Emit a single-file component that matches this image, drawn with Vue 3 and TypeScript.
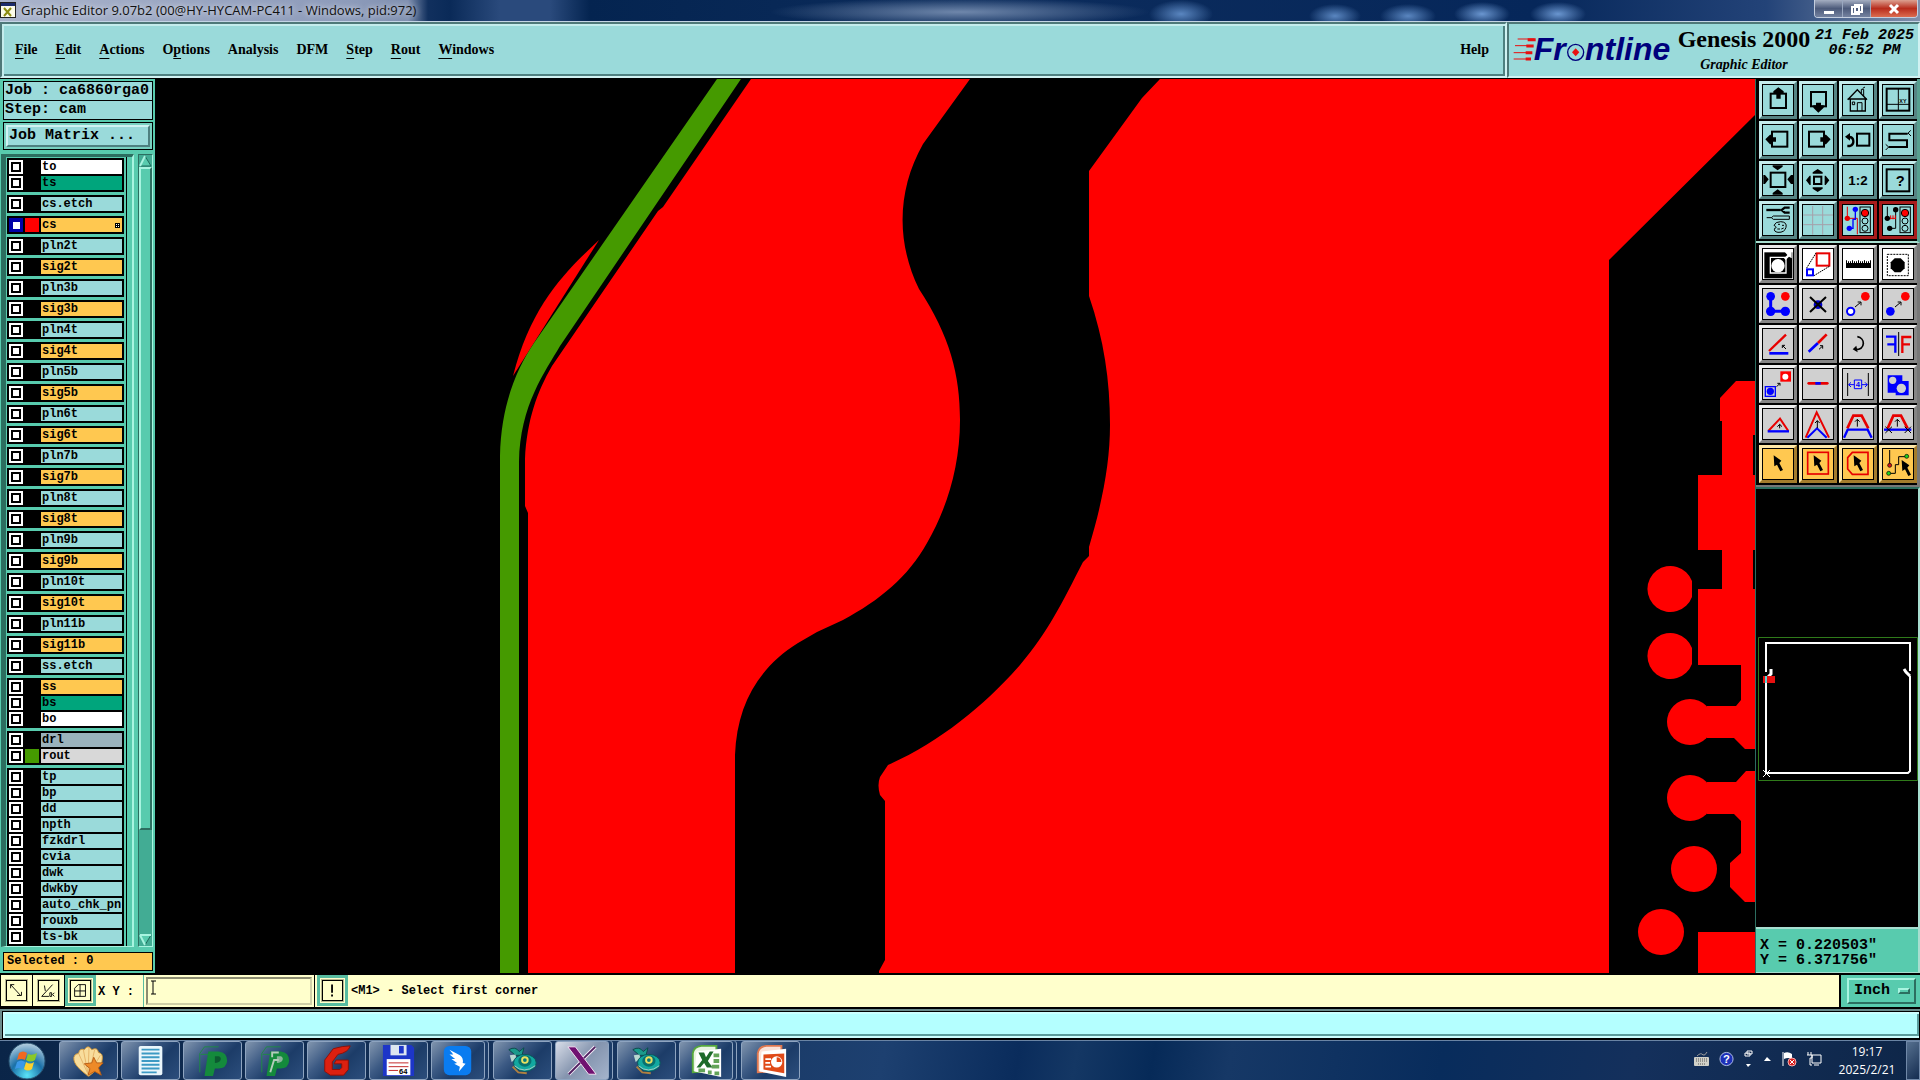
<script setup lang="ts">
import { ref } from 'vue'

interface MenuItem { before: string; key: string; after: string }
interface Layer { name: string; tone: string; color?: string; active?: boolean }
interface Tool { label: string; art: string; y: number; tone?: string }
interface Task { label: string; art: string; stacked?: boolean; active?: boolean }

const menus: MenuItem[] = [
  { before: '', key: 'F', after: 'ile' },
  { before: '', key: 'E', after: 'dit' },
  { before: '', key: 'A', after: 'ctions' },
  { before: 'O', key: 'p', after: 'tions' },
  { before: 'Analysis', key: '', after: '' },
  { before: 'DFM', key: '', after: '' },
  { before: '', key: 'S', after: 'tep' },
  { before: '', key: 'R', after: 'out' },
  { before: '', key: 'W', after: 'indows' },
]

const innerNames = [
  'pln2t', 'sig2t', 'pln3b', 'sig3b', 'pln4t', 'sig4t', 'pln5b', 'sig5b', 'pln6t', 'sig6t',
  'pln7b', 'sig7b', 'pln8t', 'sig8t', 'pln9b', 'sig9b', 'pln10t', 'sig10t', 'pln11b', 'sig11b',
]

const layerGroups: Layer[][] = [
  [{ name: 'to', tone: 'silk' }, { name: 'ts', tone: 'mask' }],
  [{ name: 'cs.etch', tone: 'misc' }],
  [{ name: 'cs', tone: 'signal', color: '#ff0000', active: true }],
  ...innerNames.map((name): Layer[] => [{ name, tone: name.startsWith('sig') ? 'signal' : 'misc' }]),
  [{ name: 'ss.etch', tone: 'misc' }],
  [{ name: 'ss', tone: 'signal' }, { name: 'bs', tone: 'mask' }, { name: 'bo', tone: 'silk' }],
  [{ name: 'drl', tone: 'drill' }, { name: 'rout', tone: 'rout', color: '#459a00' }],
  ['tp', 'bp', 'dd', 'npth', 'fzkdrl', 'cvia', 'dwk', 'dwkby', 'auto_chk_pnl', 'rouxb', 'ts-bk']
    .map((name): Layer => ({ name, tone: 'misc' })),
]

const k = 'fill="none" stroke="#000"'
const b = 'fill="none" stroke="#0000ff"'
const r = 'fill="none" stroke="#e80000"'
const cursor = (x: number, y: number) =>
  `<path transform="translate(${x} ${y})" d="M0 0L23 16L17 23L28 44L20 48L10 28L2 33Z"/>`
const upArrow = (x: number, y: number, h: number) =>
  `<path ${k} stroke-width="3" d="M${x} ${y + h}V${y}M${x - 7} ${y + 7}L${x} ${y}L${x + 7} ${y + 7}"/>`

const viewTools: Tool[] = [
  { label: 'Pan up', y: 24, art: `<rect ${k} stroke-width="6" x="62" y="53" width="46" height="43"/><path d="M70 46L85 34L101 46V52H92V68H79V52H70Z"/>` },
  { label: 'Pan down', y: 24, art: `<rect ${k} stroke-width="6" x="183" y="48" width="45" height="43"/><path d="M190 88V95L205 110L221 95V88H213V80H198V88Z"/>` },
  { label: 'Home', y: 24, art: `<path ${k} stroke-width="4" d="M293 71L322 41L351 71M301 68V105H346V68M293 69H351"/><path ${k} stroke-width="3" d="M322 105V80H336V105M307 78H314V86H307ZM334 52V40H341V60M338 37L345 33"/>` },
  { label: 'Origin window', y: 24, art: `<rect ${k} stroke-width="6" x="410" y="38" width="68" height="66"/><path ${k} stroke-width="3" d="M445 38V104M410 85H479"/><text x="448" y="81" font-size="16">XY</text>` },
  { label: 'Pan left', y: 144, art: `<rect ${k} stroke-width="6" x="66" y="167" width="46" height="45"/><path d="M46 190L60 176H66V184H78V197H66V205H60Z"/>` },
  { label: 'Pan right', y: 144, art: `<rect ${k} stroke-width="6" x="177" y="167" width="45" height="45"/><path d="M242 190L228 176H221V184H211V197H221V205H228Z"/>` },
  { label: 'Previous view', y: 144, art: `<rect ${k} stroke-width="6" x="321" y="173" width="37" height="36"/><path ${k} stroke-width="7" d="M292 210H300Q311 206 310 195Q309 183 297 183"/><path d="M285 182L300 171V194Z"/>` },
  { label: 'Serpentine', y: 144, art: `<path ${k} stroke-width="6" d="M473 173H418V193H471V213H416"/><path ${k} stroke-width="3" d="M473 173L482 163M474 171L483 180M416 213L407 205M416 213L407 222"/>` },
  { label: 'Zoom in', y: 264, art: `<rect ${k} stroke-width="6" x="62" y="290" width="44" height="43"/><path d="M68 268H98V272L83 283L68 272ZM68 356V351L83 340L98 351V356ZM40 297H45L56 310L45 324H40ZM129 297H123L112 310L123 324H129Z"/>` },
  { label: 'Zoom out', y: 264, art: `<rect ${k} stroke-width="6" x="192" y="302" width="22" height="22"/><path d="M188 293V289L203 279L218 289V293ZM188 334V338L203 348L218 338V334ZM182 299H179L168 313L179 327H182ZM224 299H227L238 313L227 327H224Z"/>` },
  { label: 'Scale 1:2', y: 264, art: `<text x="324" y="328" text-anchor="middle" font-size="40">1:2</text>` },
  { label: 'Query', y: 264, art: `<rect ${k} stroke-width="6" x="410" y="280" width="68" height="66"/><text x="451" y="331" text-anchor="middle" font-size="44">?</text>` },
  { label: 'Setup', y: 384, art: `<path ${k} stroke-width="7" d="M49 402H92"/><path ${k} stroke-width="7" d="M119 395H104L95 402L104 410H119"/><path ${k} stroke-width="3" d="M50 425H64L70 420H118V430H70L64 425M72 448Q76 437 92 437Q112 438 108 454Q104 470 84 469Q70 467 74 457Q84 455 72 448ZM84 445H90M96 448H102M82 459H90M94 459L101 456"/>` },
  { label: 'Grid', y: 384, art: `<path fill="none" stroke="#a5a0aa" stroke-width="3" d="M188 390V476M218 390V476M160 417H249M160 446H249"/>` },
  { label: 'Net check', y: 384, tone: 'alarm', art: `<path ${r} stroke-width="3" d="M292 392V427H322V475"/><path ${b} stroke-width="4" d="M316 400V430H309V457H298"/><circle fill="#e80000" cx="292" cy="427" r="8"/><circle fill="#0000ff" cx="316" cy="400" r="8"/><circle fill="#0000ff" cx="298" cy="457" r="8"/><rect ${k} stroke-width="3" x="330" y="393" width="31" height="77"/><circle fill="#f00" stroke="#000" stroke-width="3" cx="345" cy="411" r="11"/><circle ${k} stroke-width="3" cx="345" cy="435" r="9"/><circle ${k} stroke-width="3" cx="345" cy="457" r="9"/>` },
  { label: 'Rule check', y: 384, tone: 'alarm', art: `<path ${k} stroke-width="3" d="M412 392V427M437 401V457H418"/><path ${r} stroke-width="3" d="M414 427H438M422 418V430M429 418V430M436 418V430"/><circle cx="412" cy="427" r="8"/><circle cx="437" cy="401" r="8"/><circle cx="419" cy="457" r="8"/><rect ${k} stroke-width="3" x="450" y="393" width="31" height="77"/><circle fill="#f00" stroke="#000" stroke-width="3" cx="465" cy="411" r="11"/><circle ${k} stroke-width="3" cx="465" cy="435" r="9"/><circle ${k} stroke-width="3" cx="465" cy="457" r="9"/>` },
]

const editTools: Tool[] = [
  { label: 'Select feature', y: 515, tone: 'white', art: `<rect x="43" y="528" width="84" height="78"/><path fill="none" stroke="#fff" stroke-width="4" d="M61 543H108V590H61Z"/><circle fill="#fff" cx="84" cy="568" r="20"/><path fill="#fff" d="M102 546L112 536L104 526H125V546L117 541L107 551Z"/>` },
  { label: 'Reshape', y: 515, tone: 'white', art: `<rect ${b} stroke-width="6" x="171" y="579" width="18" height="18"/><rect ${r} stroke-width="6" x="200" y="531" width="38" height="37"/><path ${k} stroke-width="3" stroke-dasharray="5 2" d="M170 575L198 530M192 598L238 570"/>` },
  { label: 'Measure', y: 515, tone: 'white', art: `<path d="M288 552H291V560H294V555H297V560H300V555H303V560H306V552H309V560H312V555H315V560H318V555H321V560H324V552H327V560H330V555H333V560H336V555H339V560H342V552H345V560H348V555H351V560H354V555H357V560H360V552H363V575H288Z"/>` },
  { label: 'Pad select', y: 515, tone: 'white', art: `<rect ${k} stroke-width="3" stroke-dasharray="6 3" x="412" y="534" width="63" height="64"/><path d="M434 546H452L464 558V576L452 588H434L422 576V558Z"/>` },
  { label: 'Add net', y: 24, art: `<path ${b} stroke-width="9" d="M62 49V94H106"/><circle fill="#00f" cx="62" cy="49" r="13"/><circle fill="#00f" cx="62" cy="94" r="14"/><circle fill="#00f" cx="106" cy="94" r="14"/><circle fill="#f00" cx="106" cy="49" r="13"/>` },
  { label: 'Delete', y: 24, art: `<circle fill="#00c" cx="204" cy="74" r="13"/><path ${k} stroke-width="6" d="M180 51L228 96M228 51L180 96"/>` },
  { label: 'Move', y: 24, art: `<circle fill="#f00" cx="346" cy="49" r="13"/><circle fill="#fff" stroke="#00f" stroke-width="6" cx="302" cy="94" r="11"/><path ${k} stroke-width="3" d="M315 81L332 67M323 66H333V76"/>` },
  { label: 'Copy', y: 24, art: `<circle fill="#f00" cx="466" cy="49" r="13"/><circle fill="#00f" cx="421" cy="94" r="13"/><path ${k} stroke-width="3" d="M435 81L452 67M443 66H453V76"/>` },
  { label: 'Rotate', y: 144, art: `<path ${r} stroke-width="7" d="M57 213L108 164"/><path ${b} stroke-width="8" d="M58 220H115"/><path ${k} stroke-width="3" d="M108 207L98 197M97 204V196H105"/>` },
  { label: 'Extend line', y: 144, art: `<path ${b} stroke-width="8" d="M176 215L204 189"/><path ${r} stroke-width="8" d="M204 189L230 163"/><path ${k} stroke-width="3" d="M207 208L218 198M210 197H218V206"/>` },
  { label: 'Undo', y: 144, art: `<path ${k} stroke-width="5" d="M322 170C346 174 348 208 316 209"/><path d="M308 208L319 197L323 217Z"/>` },
  { label: 'Mirror', y: 144, art: `<path ${b} stroke-width="7" d="M436 218V170H408M436 193H412"/><path ${k} stroke-width="3" d="M446 156V228"/><path ${r} stroke-width="7" d="M457 219V171H484M457 193H480"/>` },
  { label: 'Change symbol', y: 264, art: `<rect fill="#f00" x="91" y="274" width="32" height="31"/><circle fill="#fff" cx="106" cy="290" r="9"/><rect ${b} stroke-width="4" x="46" y="320" width="30" height="29"/><circle fill="#00f" cx="61" cy="334" r="11"/><path ${k} stroke-width="3" d="M80 320L89 311M82 310H90V317"/>` },
  { label: 'Break line', y: 264, art: `<path ${r} stroke-width="8" stroke-linecap="round" d="M176 310H232"/><path ${b} stroke-width="8" d="M196 310H212"/>` },
  { label: 'Spacing', y: 264, art: `<path ${k} stroke-width="3" d="M293 279V348M355 279V348"/><path ${b} stroke-width="3" d="M296 314H312M336 314H352M303 307L296 314L303 321M345 307L352 314L345 321M313 300H335V326H313Z"/><text fill="#00f" x="324" y="322" text-anchor="middle" font-size="23">4</text>` },
  { label: 'Merge pads', y: 264, art: `<path fill="#00f" d="M413 286H457V303H476V346H437V338H413Z"/><circle fill="#d0d0d0" cx="428" cy="301" r="11"/><circle fill="#d0d0d0" cx="454" cy="325" r="14"/>` },
  { label: 'Chamfer', y: 384, art: `<path ${r} stroke-width="6" d="M55 453L90 416L115 453"/><path ${b} stroke-width="7" d="M53 454H117"/>${upArrow(89, 433, 12)}` },
  { label: 'Peak', y: 384, art: `<path ${r} stroke-width="6" d="M167 473L200 397L237 473"/><path ${b} stroke-width="6" d="M172 473L201 445L230 473"/>${upArrow(202, 422, 22)}` },
  { label: 'Slide segment', y: 384, art: `<path ${r} stroke-width="8" d="M292 445L310 407H335L355 445"/><path ${b} stroke-width="7" d="M282 473L293 449H353L365 473"/>${upArrow(322, 418, 22)}` },
  { label: 'Stretch segment', y: 384, art: `<path ${r} stroke-width="8" d="M413 445L430 407H453L473 445"/><path ${b} stroke-width="7" d="M402 449H484"/><path ${k} stroke-width="3" d="M406 440L426 459M426 440L406 459M464 440L483 459M483 440L464 459"/>${upArrow(442, 418, 22)}` },
  { label: 'Pick', y: 504, tone: 'gold', art: cursor(71, 526) },
  { label: 'Pick in frame', y: 504, tone: 'gold', art: `<rect ${r} stroke-width="5" x="173" y="517" width="62" height="65"/>${cursor(191, 526)}` },
  { label: 'Pick in polygon', y: 504, tone: 'gold', art: `<path ${r} stroke-width="5" d="M307 517H354V583H307L293 567V533Z"/>${cursor(311, 526)}` },
  { label: 'Pick net', y: 504, tone: 'gold', art: `<path ${k} stroke-width="3" d="M419 510V553M416 580H436V554H446V530H468"/><circle fill="#d01818" stroke="#000" stroke-width="2" cx="419" cy="556" r="6"/><circle fill="#20d020" stroke="#000" stroke-width="2" cx="416" cy="580" r="6"/><circle fill="#20d020" stroke="#000" stroke-width="2" cx="470" cy="529" r="6"/>${cursor(455, 540)}` },
]

const iconBox = (tool: Tool, i: number) => `${36 + 120 * (i % 4)} ${tool.y} 96 96`

const ship = `<path d="M3 6Q10 2 14 8L19 4L17 12L10 12Z" fill="#1a9a8c" stroke="#0c4a48"/><path d="M4 12L10 11L11 15L6 19Z" fill="#b8d8d0"/><ellipse cx="20" cy="20" rx="12" ry="9" fill="#12a8a0" stroke="#0a5558"/><path d="M9 23Q19 32 31 23" fill="none" stroke="#a8ccc4" stroke-width="1"/><ellipse cx="20" cy="18" rx="7" ry="6" fill="#087070"/><circle cx="20" cy="17" r="4" fill="#e8e060"/><circle cx="20" cy="17" r="2" fill="#087878"/><path d="M7 24L13 30L22 31" fill="none" stroke="#b08040" stroke-width="2"/>`
const pcbP = (tone: string) => `<path d="M4 30V10L9 3H24M5 11H14" fill="none" stroke="#1e8a44"/><path d="M13 8H24Q33 9 33 18Q32 26 24 26H20L18 34H9Z" fill="#148a3c"/><path d="M20 13H24Q27 14 26 17Q25 20 20 20Z" fill="${tone}"/>`

const tasks: Task[] = [
  { label: 'Shell', art: `<path d="M17 34C10 28 1 22 2 14Q3 10 7 10Q8 4 13 6Q17 0 21 6Q27 3 28 9Q33 10 32 16C32 24 24 29 18 34Z" fill="#f8dd9c" stroke="#d49a3a"/><path d="M17 32L7 10M17 32L12 6M17 32L18 4M18 32L24 6M18 32L30 12" stroke="#e4b468" fill="none"/><path d="M23 14L26 20L33 20L28 25L31 33L24 29L17 33L19 26L13 21L21 20Z" fill="#ee8a28" stroke="#b85e14"/>` },
  { label: 'Notepad', art: `<rect x="5" y="2" width="25" height="31" rx="2" fill="#eaf6fb"/><path d="M8 6H27M8 10H27M8 14H27M8 18H27M8 22H27M8 26H27M8 30H24" stroke="#3d9ac4" stroke-width="2"/>` },
  { label: 'Panel tool', art: pcbP('#0c5a30') },
  { label: 'Film tool', art: `${pcbP('#8ab49a')}<path d="M15 14V9H22M13 30L17 17H22" fill="none" stroke="#b4ccbc" stroke-width="2"/>` },
  { label: 'Gerber tool', art: `<path d="M32 2Q24 2 14 5L5 17V29L11 33H25L30 27V17H17L15 21H23V25L21 27H13V19L19 11Q30 9 32 2Z" fill="#dc2010" stroke="#8c1008"/>` },
  { label: 'Disk', art: `<path d="M1 1H31L34 4V34H1Z" fill="#1d36c8"/><rect x="9" y="1" width="17" height="11" fill="#dde6f0"/><rect x="18" y="2" width="5" height="8" fill="#1d36c8"/><rect x="5" y="16" width="25" height="17" fill="#fff"/><path d="M7 20H28M7 24H28M7 28H17" stroke="#c02020"/><text x="18" y="32" font-size="8">64</text>` },
  { label: 'Messenger', stacked: true, art: `<rect x="3" y="2" width="29" height="31" rx="6" fill="#0a7cf0"/><path d="M9 6L20 12Q24 15 23 20L26 21L19 29L20 24L14 21L17 20L11 16L15 16L9 11L13 11Z" fill="#fff"/>` },
  { label: 'Genesis', art: ship },
  { label: 'X server', stacked: true, active: true, art: `<path d="M3 3H11L33 32H25Z" fill="#701070" stroke="#f4e8f4"/><path d="M32 3L20 15M16 20L4 32" stroke="#f0e8f4" stroke-width="4"/><path d="M32 3L20 15M16 20L4 32" stroke="#502060" stroke-width="2"/>` },
  { label: 'Genesis output', art: ship },
  { label: 'Excel', stacked: true, art: `<path d="M4 30V10Q5 3 13 2H29V28Z" fill="#e8f4e2" stroke="#56a83c" stroke-width="2"/><path d="M8 8L34 5V35L6 29Z" fill="#fff"/><path d="M10 9H16L18 14L22 8H26L20 18L25 25H19L16 20L12 25H8L14 17Z" fill="#1d6a2a"/><path d="M26 12H32M26 18H32M24 24H32M10 28H17M20 30H24M27 31H32" stroke="#63a458" stroke-width="4"/>` },
  { label: 'PowerPoint', art: `<path d="M4 30V10Q5 3 13 2H29V28Z" fill="#fbe2d8" stroke="#e07850" stroke-width="2"/><path d="M8 8L34 5V35L6 29Z" fill="#fff"/><path d="M10 11L32 10V31L10 27Z" fill="#e04a18"/><circle cx="24" cy="19" r="6" fill="#fff"/><path d="M24 19V14A5 5 0 0 1 29 19Z" fill="#e04a18"/><path d="M12 16H18M12 20H17M12 24H18" stroke="#fff" stroke-width="2"/>` },
]

const xy = ref('')
const unit = ref('Inch')
</script>

<template>
  <div class="desktop">
    <header class="titlebar">
      <svg class="app-icon" viewBox="0 0 16 16" aria-hidden="true"><rect x="0.5" y="0.5" width="15" height="15" fill="#fbfbe8" stroke="#222" /><rect x="1" y="1" width="14" height="3" fill="#1c2c6c" /><path d="M4 6L11 14M11 6L4 14" stroke="#8c8c10" stroke-width="2" /></svg>
      <span class="title">Graphic Editor 9.07b2 (00@HY-HYCAM-PC411 - Windows, pid:972)</span>
      <div class="win-buttons">
        <button class="win" aria-label="Minimize"><svg viewBox="0 0 14 12"><path d="M2 8H12V11H2Z" fill="#fff" /></svg></button>
        <button class="win" aria-label="Restore"><svg viewBox="0 0 14 12"><path d="M5 2H12V9H5ZM2 4H9V11H2Z" fill="none" stroke="#fff" stroke-width="2" /></svg></button>
        <button class="win close" aria-label="Close"><svg viewBox="0 0 14 12"><path d="M3 2L11 10M11 2L3 10" stroke="#fff" stroke-width="3" /></svg></button>
      </div>
    </header>

    <div class="header">
      <nav class="menubar">
        <button v-for="m in menus" :key="m.before + m.key + m.after" class="menu">{{ m.before }}<u v-if="m.key">{{ m.key }}</u>{{ m.after }}</button>
        <button class="menu help">Help</button>
      </nav>
      <div class="brand">
        <svg class="logo" viewBox="218 84 492 132" role="img" aria-label="Frontline">
          <g fill="none" stroke="#e81010"><path stroke-width="3" d="M232 117H282M224 137H278M220 158H275M220 177H270" /><path stroke-width="9" d="M262 119H286M258 138H280M256 158H276M256 177H272" /></g>
          <g class="logo-text"><text x="280" y="180">Fr</text><text x="434" y="180">ntline</text></g>
          <circle cx="406" cy="157" r="24" fill="none" stroke="#00007c" stroke-width="4" />
          <path d="M406 145L417 157L406 169L395 157Z" fill="#e81010" />
        </svg>
        <div class="product"><div class="product-name">Genesis 2000</div><div class="product-sub">Graphic Editor</div></div>
        <div class="clock"><div>21 Feb 2025</div><div>06:52 PM</div></div>
      </div>
    </div>

    <main class="workspace">
      <aside class="left">
        <div class="job">
          <div>Job : ca6860rga0</div>
          <div>Step: cam</div>
        </div>
        <div class="matrix"><button>Job Matrix ...</button></div>
        <div class="layers">
          <div class="layer-frame">
            <div v-for="(group, g) in layerGroups" :key="g" class="group">
              <div v-for="layer in group" :key="layer.name" class="layer">
                <input :id="'layer-' + layer.name" type="checkbox" :checked="layer.active">
                <span class="swatch" :style="{ background: layer.color }"></span>
                <label :for="'layer-' + layer.name" :class="layer.tone">{{ layer.name }}<svg v-if="layer.active" viewBox="0 0 5 5" aria-hidden="true"><path d="M0 0H5V5H0Z" /><path d="M1 1H2V2H1ZM3 1H4V2H3ZM1 3H2V4H1ZM3 3H4V4H3Z" fill="#fff" /></svg></label>
              </div>
            </div>
          </div>
          <div class="scrollbar">
            <svg viewBox="0 0 13 12" aria-hidden="true"><path d="M1 11L6 1L12 11Z" fill="#58cbae" stroke="#1f6a5c" /><path d="M1 11L6 1" stroke="#a8f4e0" stroke-width="2" /></svg>
            <div class="thumb"></div>
            <svg class="down" viewBox="0 0 13 12" aria-hidden="true"><path d="M1 1L6 11L12 1Z" fill="#58cbae" stroke="#1f6a5c" /><path d="M1 1H12M1 1L6 11" stroke="#a8f4e0" stroke-width="2" /></svg>
          </div>
        </div>
        <div class="selected">Selected : 0</div>
      </aside>

      <svg class="board" viewBox="156 79 1599 894" preserveAspectRatio="none" role="img" aria-label="Board artwork">
        <g fill="#ff0000">
          <path d="M751 79H970L923 144C897 190 896 242 919 289C950 336 960 375 960 420C960 468 946 510 927 543C908 577 880 600 843 620L817 632L798 643C758 668 737 705 735 755V973H528V513L525 506V459C527 420 537 392 552 366L658 211L663 207Z" />
          <path d="M1160 79H1755V115L1609 260V973H879V971L885 960V801L880 795Q877 785 880 777L888 765C940 742 985 705 1020 665C1048 632 1062 603 1083 562L1089 556V547C1103 500 1110 462 1110 425C1110 380 1104 340 1089 296V171L1142 98Z" />
          <path d="M599 240C565 272 531 305 513 376Z" />
          <path d="M1755 381H1736L1720 398V421H1722V475H1698V550H1722V589H1698V665H1741V700L1736 706H1707V738H1734L1745 749H1755V589H1753V550H1755V475H1753V435H1755Z" />
          <path d="M1755 771H1746L1736 782H1707V814H1734L1741 821V853L1730 863V887L1745 902H1755Z" />
          <path d="M1692 581A23 23 0 1 0 1692 597ZM1692 648A23 23 0 1 0 1692 664Z" />
          <circle cx="1690" cy="722" r="23" /><circle cx="1690" cy="798" r="23" />
          <circle cx="1694" cy="869" r="23" /><circle cx="1661" cy="932" r="23" />
          <path d="M1698 932H1755V973H1698Z" />
        </g>
        <path fill="#459a00" d="M717 79H741L560 346C545 372 520 405 519 462V973H500V456C501 405 517 368 534 343Z" />
      </svg>

      <aside class="right">
        <div class="tools view">
          <button v-for="(tool, i) in viewTools" :key="tool.label" class="tool" :class="tool.tone" :aria-label="tool.label">
            <svg :viewBox="iconBox(tool, i)" v-html="tool.art"></svg>
          </button>
        </div>
        <div class="tools edit">
          <button v-for="(tool, i) in editTools" :key="tool.label" class="tool" :class="tool.tone || 'grey'" :aria-label="tool.label">
            <svg :viewBox="iconBox(tool, i)" v-html="tool.art"></svg>
          </button>
        </div>
        <div class="overview">
          <svg viewBox="1756 637 162 144" preserveAspectRatio="none" role="img" aria-label="Overview">
            <path d="M1758.500 637.500H1917.500V780.500H1758.500Z" fill="none" stroke="#2f7a1a" />
            <path d="M1766 672V643H1910V671M1910 676V771L1908 773H1766V678" fill="none" stroke="#fff" stroke-width="2" />
            <path d="M1771 669V674L1767 678M1904 669L1906 672L1910 676" fill="none" stroke="#fff" stroke-width="3" />
            <path d="M1763 676H1775V683H1763Z" fill="#e81010" /><path d="M1765 676H1767V683H1765Z" fill="#5ad8d8" />
            <path d="M1763 770L1770 777M1770 770L1763 777" stroke="#fff" />
          </svg>
        </div>
        <div class="coords"><div>X = 0.220503"</div><div>Y = 6.371756"</div></div>
      </aside>
    </main>

    <div class="command">
      <button class="cmd" aria-label="Snap off"><svg viewBox="0 0 21 21"><path d="M4 4L15 16M4 8V4H8M11 16H16V12" /></svg></button>
      <button class="cmd" aria-label="Angle"><svg viewBox="0 0 21 21"><path d="M3 17L15 4M3 17H11M6 5L7 11M12 13H14V17H12ZM17 13L15 15L17 17" /></svg></button>
      <button class="cmd on" aria-label="Grid snap"><svg viewBox="0 0 21 21"><path d="M4 8L8 4H16V17H4ZM10 4V17M4 11H16" /></svg></button>
      <label class="xy" for="xy">X Y :</label>
      <div class="entry">
        <input id="xy" v-model="xy" type="text">
        <svg class="ibeam" viewBox="0 0 7 15" aria-hidden="true"><path d="M1 1H6M1 14H6M3 1V14" fill="none" stroke="#000" /></svg>
      </div>
      <button class="cmd on alert" aria-label="Abort"><svg viewBox="0 0 21 21"><path d="M10 4V13M10 15V17" stroke-width="2" /></svg></button>
      <div class="prompt">&lt;M1&gt; - Select first corner</div>
      <div class="unit">
        <select v-model="unit" aria-label="Units"><option>Inch</option><option>MM</option></select>
        <span class="unit-mark"></span>
      </div>
    </div>

    <div class="message"><div></div></div>

    <footer class="taskbar">
      <button class="start" aria-label="Start">
        <svg viewBox="0 0 38 38">
          <defs><radialGradient id="orb" cx="50%" cy="90%" r="90%"><stop offset="0" stop-color="#5ae4f8" /><stop offset="0.500" stop-color="#1a70a8" /><stop offset="1" stop-color="#b8d0e0" /></radialGradient></defs>
          <circle cx="19" cy="19" r="18" fill="url(#orb)" stroke="#28506e" />
          <path d="M11 11Q15 8 19 11L17 18Q13 16 9 18Z" fill="#f06820" /><path d="M20 12Q24 14 29 11L27 18Q23 21 18 18Z" fill="#8ac828" />
          <path d="M9 20Q13 17 17 20L15 27Q11 25 7 27Z" fill="#3a98e8" /><path d="M18 20Q22 23 26 20L24 27Q20 30 16 27Z" fill="#fcd02c" />
        </svg>
      </button>
      <div class="tasks">
        <button v-for="task in tasks" :key="task.label" class="task" :class="{ stacked: task.stacked, active: task.active }" :aria-label="task.label">
          <svg viewBox="0 0 36 36" v-html="task.art"></svg>
        </button>
      </div>
      <div class="tray">
        <svg class="w15" viewBox="0 0 15 16" aria-hidden="true"><path d="M3 5Q7 1 9 4Q11 5 13 1" fill="none" stroke="#999" /><rect y="6" width="15" height="9" rx="1" fill="#d0d0c8" /><path d="M2 8H13M2 10H13M4 13H11" stroke="#555" stroke-dasharray="1 1" /></svg>
        <svg class="w15" viewBox="0 0 16 16" aria-hidden="true"><circle cx="8" cy="8" r="7" fill="#1c30b8" stroke="#b8c4e8" /><text x="8" y="12" text-anchor="middle" font-size="12" fill="#fff">?</text></svg>
        <svg class="w9" viewBox="0 0 9 18" aria-hidden="true"><path d="M3 1H8V4H3ZM1 3H6V6H1Z" fill="#10264c" stroke="#fff" /><path d="M2 14H7L4 17Z" fill="#fff" /></svg>
        <svg class="w9" viewBox="0 0 9 18" aria-hidden="true"><path d="M1 11L4 7L8 11Z" fill="#fff" /></svg>
        <svg class="w15" viewBox="0 0 15 16" aria-hidden="true"><path d="M1 1V15" stroke="#fff" /><path d="M2 2Q6 0 10 3V8Q6 6 2 8Z" fill="#fff" /><circle cx="10" cy="11" r="4" fill="#d82020" stroke="#f8b0b0" /><path d="M8 9L12 13M12 9L8 13" stroke="#fff" /></svg>
        <svg class="w15" viewBox="0 0 15 16" aria-hidden="true"><path d="M5 4H14V12H5ZM7 14H12" fill="none" stroke="#fff" stroke-width="1" /><path d="M1 1V4M4 1V4M0 4H5V7H3V14H5" fill="none" stroke="#fff" /></svg>
        <div class="time"><div>19:17</div><div>2025/2/21</div></div>
        <button class="show-desktop" aria-label="Show desktop"></button>
      </div>
    </footer>
  </div>
</template>

<style>
body { margin: 0; background: #000; }
</style>

<style scoped>
* { box-sizing: border-box; }
button, input, select { margin: 0; padding: 0; border: 0; border-radius: 0; background: none; color: inherit; font: inherit; }
svg { display: block; }

.desktop { display: flex; flex-direction: column; min-height: 100vh; color: #000; font: bold 12px/16px "Liberation Mono", monospace; }

/* title bar */
.titlebar {
  display: flex; align-items: center; height: 22px; padding-bottom: 1px;
  border-bottom: 1px solid #c4d4e4;
  background:
    radial-gradient(ellipse 32px 14px at 1181px 14px, #5a86c0, transparent),
    radial-gradient(ellipse 26px 12px at 1335px 16px, #5a86c0, transparent),
    radial-gradient(ellipse 28px 12px at 1408px 16px, #5a86c0, transparent),
    radial-gradient(ellipse 28px 12px at 1482px 14px, #6a96d0, transparent),
    radial-gradient(ellipse 28px 12px at 1558px 14px, #6a96d0, transparent),
    radial-gradient(ellipse 190px 14px at 960px 12px, #6f87ab, transparent),
    linear-gradient(90deg, #a9b3cb 0, #8d9bba 350px, #8090b0 408px, #11305e 428px, #0a2a58 450px, #2a4a7c 500px, #2a4a7c 550px, #042450 590px, #0c2c5c 50%, #06275a 80%, #234378 92%, #8090ac 100%);
}
.app-icon { width: 16px; height: 16px; }
.title { flex: 1; padding-left: 5px; color: #111; font: 13px/18px "Open Sans", "Noto Sans", sans-serif; white-space: nowrap; text-shadow: 0 0 6px #fff; }
.win-buttons { display: flex; align-self: flex-start; margin-right: 2px; border: 1px solid #c4cede; border-top: 0; border-radius: 0 0 4px 4px; overflow: hidden; }
.win { display: grid; place-items: center; width: 28px; height: 17px; border-right: 1px solid #9aa8c0; background: linear-gradient(#a4aec2, #4c5a7a 50%, #7482a0); }
.win.close { width: 46px; border-right: 0; background: linear-gradient(#dca090, #b82c1c 50%, #dc6c50); }
.win svg { width: 14px; height: 12px; }

/* menu bar and brand */
.header { display: flex; height: 56px; background: #9adada; }
.menubar, .brand {
  border: 2px solid; border-color: #4e7878 #d0f2f2 #d0f2f2 #4e7878;
}
.menubar { display: flex; flex: 1; align-items: center; gap: 18px; padding: 0 16px 0 13px; box-shadow: inset 2px 2px #c4ecec, inset -2px -2px #4e8080; }
.menu { font: bold 14px/20px "Liberation Serif", serif; }
.menu u { text-underline-offset: 4px; text-decoration-thickness: 1px; }
.help { margin-left: auto; }
.brand { display: flex; width: 413px; padding-left: 4px; }
.logo { width: 164px; height: 44px; margin-top: 4px; }
.logo-text { fill: #00007c; font: italic bold 96px "Liberation Sans", sans-serif; }
.product { width: 134px; text-align: center; white-space: nowrap; }
.product-name { font: bold 24px/30px "Liberation Serif", serif; }
.product-sub { font: italic bold 14px/22px "Liberation Serif", serif; }
.clock { flex: 1; padding-top: 4px; font: italic bold 15px/15px "Liberation Mono", monospace; text-align: center; white-space: nowrap; }

/* workspace */
.workspace { display: flex; flex: 1; padding: 1px 0 2px; background: #000; }

.left { display: flex; flex-direction: column; width: 155px; margin-right: 1px; padding: 2px 2px 2px; border-left: 1px solid #58cbae; background: #58cbae; }
.job { border: 1px solid #000; background: #9adada; font-size: 15px; line-height: 18px; white-space: nowrap; }
.job div { padding-left: 1px; }
.job div + div { border-top: 1px solid #000; }
.matrix { margin-top: 2px; padding: 2px; border: 1px solid #000; background: #78d0c0; }
.matrix button { display: block; width: 100%; padding-left: 1px; border: 2px solid; border-color: #d0f2f2 #4e8080 #4e8080 #d0f2f2; background: #9adada; font-size: 15px; line-height: 18px; text-align: left; }
.layers { display: flex; flex: 1; gap: 4px; margin: 4px 0 5px -2px; }
.layer-frame { width: 134px; padding: 1px 8px 0 1px; border-style: solid; border-width: 3px 2px 1px 5px; border-color: #2c6e60 #a8f4e0 #a8f4e0 #2c6e60; background: linear-gradient(90deg, transparent 120px, #000 120px, #000 121px, transparent 121px); }
.group { display: grid; grid-template-columns: minmax(0, 1fr); gap: 2px; padding: 2px; background: #000; }
.group + .group { margin-top: 3px; }
.layer { display: flex; gap: 2px; height: 14px; }
.layer input { appearance: none; width: 14px; height: 14px; background: linear-gradient(#fff, #fff) center / 6px 6px no-repeat, linear-gradient(#000, #000) center / 10px 10px no-repeat, #fff; }
.layer input:checked { background: linear-gradient(#fff, #fff) center / 7px 7px no-repeat, #0000a8; }
.swatch { width: 14px; }
.layer label { display: flex; flex: 1; align-items: center; justify-content: space-between; min-width: 0; padding-left: 1px; overflow: hidden; line-height: 14px; white-space: nowrap; }
.layer svg { width: 5px; height: 5px; margin-right: 2px; }
.misc { background: #9adada; }
.signal { background: #ffc850; }
.mask { background: #00a57c; }
.silk { background: #fff; }
.drill { background: #9ab2bc; }
.rout { background: #d8d8d8; }
.scrollbar { display: flex; flex-direction: column; width: 15px; border: 1px solid; border-color: #2c6e60 #a8f4e0 #a8f4e0 #2c6e60; background: #42ac94; }
.scrollbar svg { width: 13px; height: 12px; }
.thumb { height: 663px; border: 2px solid; border-color: #a8f4e0 #2c6e60 #2c6e60 #a8f4e0; background: #58cbae; }
.scrollbar .down { margin-top: auto; }
.selected { padding-left: 3px; border: 1px solid #000; background: #ffc850; line-height: 17px; }

.board { flex: 1; width: 0; min-width: 0; height: auto; background: #000; }

/* tool palette */
.right { display: flex; flex-direction: column; width: 165px; border-left: 1px solid #2c6e60; background: #000; }
.tools { display: grid; grid-template-columns: repeat(4, 38px); gap: 2px; padding: 2px 0 2px 3px; border-right: 3px solid #58a090; }
.view { border-bottom: 2px solid #a8ded0; }
.edit { border-color: #777; border-bottom: 2px solid #777; }
.tool { width: 38px; height: 38px; border: 3px solid; border-color: #c4ecec #568484 #568484 #c4ecec; background: #9adada; }
.tool svg { width: 32px; height: 32px; box-shadow: inset 0 0 0 1px #000; font: bold 16px "Liberation Sans", sans-serif; }
.grey { border-color: #eee #858585 #858585 #eee; background: #d0d0d0; }
.white { border-color: #e8e8e8 #858585 #858585 #e8e8e8; background: #fff; }
.gold { border-color: #ffe8a8 #a47c2c #a47c2c #ffe8a8; background: #ffc850; }
.alarm { border-color: #a81c1c; }
.overview { display: flex; flex: 1; align-items: center; border-top: 2px solid #2c6e60; border-right: 2px solid #a8ded0; border-bottom: 2px solid #a8ded0; }
.overview svg { width: 100%; height: 144px; margin-top: 1px; }
.coords { padding: 9px 0 4px 4px; border-right: 2px solid #a8ded0; border-bottom: 1px solid #a8ded0; background: #58cbae; font-size: 15px; line-height: 15px; white-space: nowrap; }

/* command line */
.command { display: flex; height: 32px; padding-left: 1px; background: #ffffcc; }
.cmd { width: 31px; height: 31px; margin-right: 1px; padding: 2px; border: 2px solid #ffffcc; outline: 1px solid #000; background: #ffffcc; }
.cmd svg { width: 21px; height: 21px; margin: 1px; border: 1px solid #000; outline: 1px solid #b8b890; fill: none; stroke: #000; }
.cmd.on { border: 3px solid #58bca0; outline: 0; padding: 1px; }
.xy { padding: 1px 9px 0 1px; line-height: 32px; }
.entry { position: relative; width: 172px; margin-right: 2px; padding: 2px; border-left: 1px solid #58bca0; border-right: 1px solid #000; }
.entry input { width: 100%; height: 28px; padding-left: 6px; border: 2px solid; border-color: #8c8c70 #d0d0a8 #d0d0a8 #8c8c70; }
.ibeam { position: absolute; left: 6px; top: 5px; width: 7px; height: 15px; }
.prompt { flex: 1; padding: 1px 0 0 2px; border-right: 2px solid #000; line-height: 31px; }
.unit { position: relative; width: 79px; padding: 3px 4px 3px 6px; background: #58cbae; }
.unit select { width: 100%; height: 26px; padding-left: 5px; border: 2px solid; border-color: #a8f4e0 #2c6e60 #2c6e60 #a8f4e0; appearance: none; font-size: 15px; }
.unit-mark { position: absolute; right: 10px; top: 13px; width: 12px; height: 6px; border: 2px solid; border-color: #a8f4e0 #2c6e60 #2c6e60 #a8f4e0; }

.message { height: 33px; padding: 2px 0 2px 2px; border-top: 2px solid #000; background: #6c8c8c; border-bottom: 1px solid #000; }
.message div { height: 28px; border: 1px solid #000; background: #b4ffff; box-shadow: inset 2px 2px #ccffff, inset 0 -2px #ccffff, inset -2px -4px #5a9c9c; }

/* taskbar */
.taskbar { display: flex; height: 40px; border-top: 1px solid #6a84a4; background: linear-gradient(100deg, #0a2548 0, #16335c 30%, #1d4070 46%, #0a2c5c 53%, #143764 56%, #062a58 60%, #163866 64%, #082c5c 75%, #14305c 85%, #0e2648 100%); }
.start { width: 59px; padding-left: 8px; }
.start svg { width: 38px; height: 38px; }
.tasks { display: flex; flex: 1; gap: 3px; }
.task { display: flex; justify-content: center; width: 59px; height: 39px; padding-top: 2px; border: 1px solid #8ea4c0; border-radius: 3px; background: linear-gradient(135deg, #8195ae 0, #3c5a84 35%, #1c3c68 60%, #2c4e7c 100%); }
.task.stacked { width: 54px; margin-right: 5px; box-shadow: 3px 0 #1c3c68, 4px 0 #8ea4c0; }
.task.active { background: linear-gradient(135deg, #d8dde8, #8494ae 50%, #a4b4cc); }
.task svg { width: 34px; height: 34px; font: bold 8px "Liberation Sans", sans-serif; }
.tray { display: flex; align-items: center; color: #fff; }
.tray svg { height: 18px; margin-right: 10px; margin-bottom: 4px; font: bold 12px "Liberation Sans", sans-serif; }
.w15 { width: 15px; }
.w9 { width: 9px; }
.time { width: 78px; margin-left: -4px; font: 12px/18px "Open Sans", "Noto Sans", sans-serif; text-align: center; }
.show-desktop { align-self: stretch; width: 14px; border: 1px solid #7088a8; background: linear-gradient(135deg, #56708f, #142c50); }
</style>
